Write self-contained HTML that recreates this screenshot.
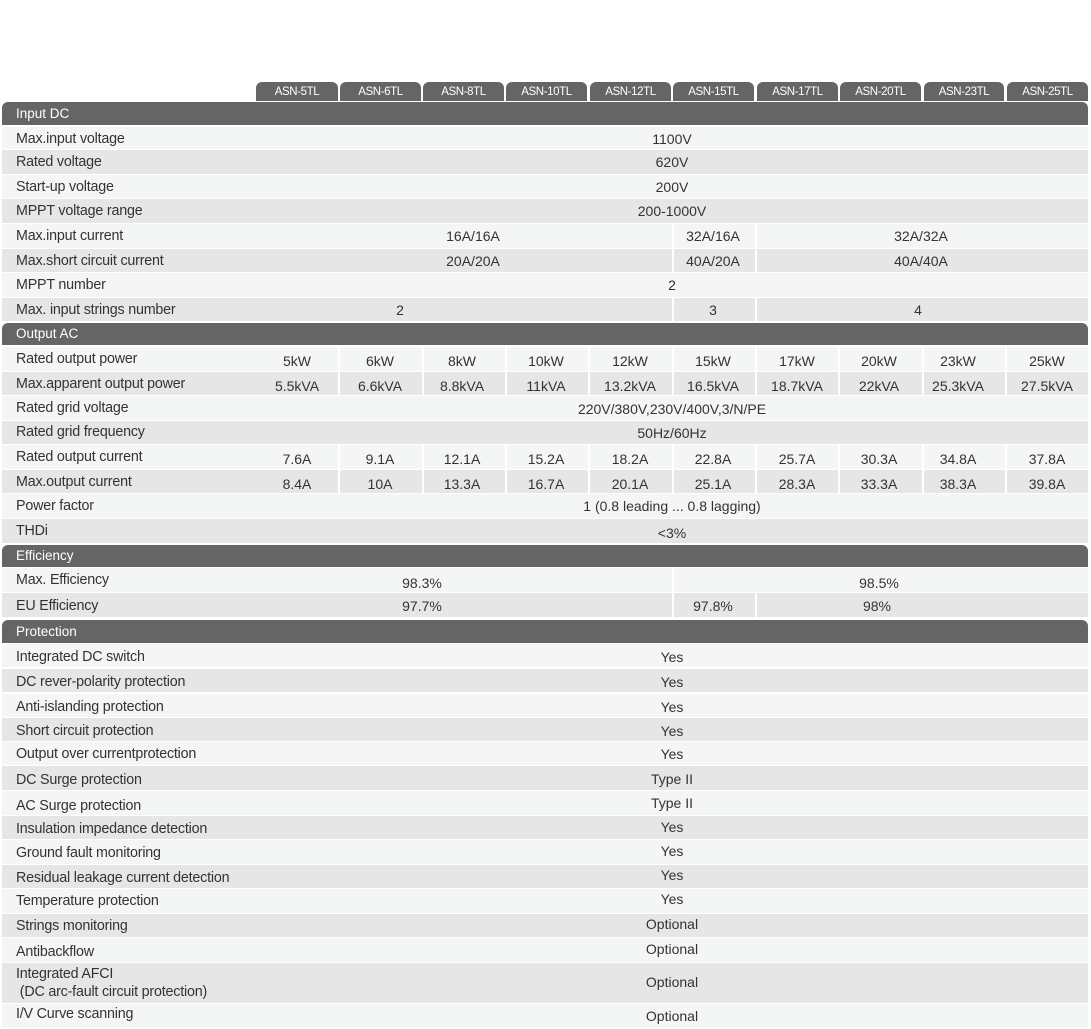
<!DOCTYPE html>
<html><head><meta charset="utf-8"><style>
body{margin:0;width:1091px;height:1029px;background:#fff;position:relative;overflow:hidden;font-family:"Liberation Sans",sans-serif;color:#333;font-size:14px}
.tab{position:absolute;top:82px;height:19px;background:#656565;color:#fff;font-size:11.5px;letter-spacing:-0.4px;line-height:20px;text-align:center;border-radius:6px 6px 0 0}
.h{position:absolute;left:2px;width:1086px;background:#656565;color:#fff;font-size:13.5px;border-radius:6px 6px 0 0}
.h span{position:absolute;left:14px}
.r{position:absolute;left:2px;width:1086px}
.L{background:#f4f5f5}.G{background:#e6e6e6}
.t{position:absolute;left:14px;white-space:nowrap;font-size:14.3px;letter-spacing:-0.2px}
.v{position:absolute;transform:translateX(-50%);white-space:nowrap}
.s{position:absolute;top:0;bottom:0;width:2px;background:#fff}
</style></head><body>
<div class="tab" style="left:256px;width:82px">ASN-5TL</div>
<div class="tab" style="left:340px;width:81px">ASN-6TL</div>
<div class="tab" style="left:423px;width:81px">ASN-8TL</div>
<div class="tab" style="left:506px;width:81px">ASN-10TL</div>
<div class="tab" style="left:590px;width:81px">ASN-12TL</div>
<div class="tab" style="left:673px;width:81px">ASN-15TL</div>
<div class="tab" style="left:757px;width:81px">ASN-17TL</div>
<div class="tab" style="left:840px;width:81px">ASN-20TL</div>
<div class="tab" style="left:924px;width:80px">ASN-23TL</div>
<div class="tab" style="left:1007px;width:81px">ASN-25TL</div>

<div class="h" style="top:102px;height:23px;line-height:23px"><span>Input DC</span></div>
<div class="r L" style="top:127px;height:22px;line-height:24px"><span class="t">Max.input voltage</span><span class="v" style="left:670px">1100V</span></div>
<div class="r G" style="top:150px;height:24px;line-height:25px"><span class="t">Rated voltage</span><span class="v" style="left:670px">620V</span></div>
<div class="r L" style="top:175px;height:23px;line-height:25px"><span class="t">Start-up voltage</span><span class="v" style="left:670px">200V</span></div>
<div class="r G" style="top:199px;height:24px;line-height:25px"><span class="t">MPPT voltage range</span><span class="v" style="left:670px">200-1000V</span></div>
<div class="r L" style="top:224px;height:24px;line-height:24px"><span class="t">Max.input current</span><span class="v" style="left:471px">16A/16A</span><span class="s" style="left:670px"></span><span class="v" style="left:711px">32A/16A</span><span class="s" style="left:753px"></span><span class="v" style="left:919px">32A/32A</span></div>
<div class="r G" style="top:249px;height:23px;line-height:24px"><span class="t">Max.short circuit current</span><span class="v" style="left:471px">20A/20A</span><span class="s" style="left:670px"></span><span class="v" style="left:711px">40A/20A</span><span class="s" style="left:753px"></span><span class="v" style="left:919px">40A/40A</span></div>
<div class="r L" style="top:273px;height:24px;line-height:24px"><span class="t">MPPT number</span><span class="v" style="left:670px">2</span></div>
<div class="r G" style="top:298px;height:23px;line-height:25px"><span class="t">Max. input strings number</span><span class="v" style="left:398px">2</span><span class="s" style="left:670px"></span><span class="v" style="left:711px">3</span><span class="s" style="left:753px"></span><span class="v" style="left:916px">4</span></div>

<div class="h" style="top:323px;height:22px;line-height:22px"><span>Output AC</span></div>
<div class="r L" style="top:347px;height:24px;line-height:28px"><span class="t" style="line-height:24px">Rated output power</span><span class="v" style="left:295px">5kW</span><span class="s" style="left:336px"></span><span class="v" style="left:378px">6kW</span><span class="s" style="left:420px"></span><span class="v" style="left:460px">8kW</span><span class="s" style="left:503px"></span><span class="v" style="left:544px">10kW</span><span class="s" style="left:586px"></span><span class="v" style="left:628px">12kW</span><span class="s" style="left:670px"></span><span class="v" style="left:711px">15kW</span><span class="s" style="left:753px"></span><span class="v" style="left:795px">17kW</span><span class="s" style="left:836px"></span><span class="v" style="left:877px">20kW</span><span class="s" style="left:920px"></span><span class="v" style="left:956px">23kW</span><span class="s" style="left:1003px"></span><span class="v" style="left:1045px">25kW</span></div>
<div class="r G" style="top:372px;height:23px;line-height:28px"><span class="t" style="line-height:24px">Max.apparent output power</span><span class="v" style="left:295px">5.5kVA</span><span class="s" style="left:336px"></span><span class="v" style="left:378px">6.6kVA</span><span class="s" style="left:420px"></span><span class="v" style="left:460px">8.8kVA</span><span class="s" style="left:503px"></span><span class="v" style="left:544px">11kVA</span><span class="s" style="left:586px"></span><span class="v" style="left:628px">13.2kVA</span><span class="s" style="left:670px"></span><span class="v" style="left:711px">16.5kVA</span><span class="s" style="left:753px"></span><span class="v" style="left:795px">18.7kVA</span><span class="s" style="left:836px"></span><span class="v" style="left:877px">22kVA</span><span class="s" style="left:920px"></span><span class="v" style="left:956px">25.3kVA</span><span class="s" style="left:1003px"></span><span class="v" style="left:1045px">27.5kVA</span></div>
<div class="r L" style="top:396px;height:24px;line-height:27px"><span class="t" style="line-height:24px">Rated grid voltage</span><span class="v" style="left:670px">220V/380V,230V/400V,3/N/PE</span></div>
<div class="r G" style="top:421px;height:23px;line-height:25px"><span class="t" style="line-height:23px">Rated grid frequency</span><span class="v" style="left:670px">50Hz/60Hz</span></div>
<div class="r L" style="top:445px;height:24px;line-height:29px"><span class="t" style="line-height:24px">Rated output current</span><span class="v" style="left:295px">7.6A</span><span class="s" style="left:336px"></span><span class="v" style="left:378px">9.1A</span><span class="s" style="left:420px"></span><span class="v" style="left:460px">12.1A</span><span class="s" style="left:503px"></span><span class="v" style="left:544px">15.2A</span><span class="s" style="left:586px"></span><span class="v" style="left:628px">18.2A</span><span class="s" style="left:670px"></span><span class="v" style="left:711px">22.8A</span><span class="s" style="left:753px"></span><span class="v" style="left:795px">25.7A</span><span class="s" style="left:836px"></span><span class="v" style="left:877px">30.3A</span><span class="s" style="left:920px"></span><span class="v" style="left:956px">34.8A</span><span class="s" style="left:1003px"></span><span class="v" style="left:1045px">37.8A</span></div>
<div class="r G" style="top:470px;height:23px;line-height:28px"><span class="t" style="line-height:24px">Max.output current</span><span class="v" style="left:295px">8.4A</span><span class="s" style="left:336px"></span><span class="v" style="left:378px">10A</span><span class="s" style="left:420px"></span><span class="v" style="left:460px">13.3A</span><span class="s" style="left:503px"></span><span class="v" style="left:544px">16.7A</span><span class="s" style="left:586px"></span><span class="v" style="left:628px">20.1A</span><span class="s" style="left:670px"></span><span class="v" style="left:711px">25.1A</span><span class="s" style="left:753px"></span><span class="v" style="left:795px">28.3A</span><span class="s" style="left:836px"></span><span class="v" style="left:877px">33.3A</span><span class="s" style="left:920px"></span><span class="v" style="left:956px">38.3A</span><span class="s" style="left:1003px"></span><span class="v" style="left:1045px">39.8A</span></div>
<div class="r L" style="top:494px;height:24px;line-height:25px"><span class="t">Power factor</span><span class="v" style="left:670px">1 (0.8 leading ... 0.8 lagging)</span></div>
<div class="r G" style="top:519px;height:24px;line-height:28px"><span class="t" style="line-height:24px">THDi</span><span class="v" style="left:670px">&lt;3%</span></div>

<div class="h" style="top:545px;height:22px;line-height:22px"><span>Efficiency</span></div>
<div class="r L" style="top:568px;height:24px;line-height:30px"><span class="t" style="line-height:24px">Max. Efficiency</span><span class="v" style="left:420px">98.3%</span><span class="s" style="left:670px"></span><span class="v" style="left:877px">98.5%</span></div>
<div class="r G" style="top:593px;height:24px;line-height:26px"><span class="t">EU Efficiency</span><span class="v" style="left:420px">97.7%</span><span class="s" style="left:670px"></span><span class="v" style="left:711px">97.8%</span><span class="s" style="left:753px"></span><span class="v" style="left:875px">98%</span></div>

<div class="h" style="top:620px;height:23px;line-height:23px"><span>Protection</span></div>
<div class="r L" style="top:644px;height:23px;line-height:26px"><span class="t">Integrated DC switch</span><span class="v" style="left:670px">Yes</span></div>
<div class="r G" style="top:669px;height:23px;line-height:26px"><span class="t">DC rever-polarity protection</span><span class="v" style="left:670px">Yes</span></div>
<div class="r L" style="top:694px;height:23px;line-height:27px"><span class="t">Anti-islanding protection</span><span class="v" style="left:670px">Yes</span></div>
<div class="r G" style="top:718px;height:23px;line-height:27px"><span class="t">Short circuit protection</span><span class="v" style="left:670px">Yes</span></div>
<div class="r L" style="top:742px;height:23px;line-height:25px"><span class="t">Output over currentprotection</span><span class="v" style="left:670px">Yes</span></div>
<div class="r G" style="top:766px;height:24px;line-height:27px"><span class="t" style="line-height:29px">DC Surge protection</span><span class="v" style="left:670px">Type II</span></div>
<div class="r L" style="top:791px;height:24px;line-height:25px"><span class="t" style="line-height:31px">AC Surge protection</span><span class="v" style="left:670px">Type II</span></div>
<div class="r G" style="top:816px;height:23px;line-height:22px"><span class="t" style="line-height:27px">Insulation impedance detection</span><span class="v" style="left:670px">Yes</span></div>
<div class="r L" style="top:840px;height:24px;line-height:22px"><span class="t" style="line-height:27px">Ground fault monitoring</span><span class="v" style="left:670px">Yes</span></div>
<div class="r G" style="top:865px;height:23px;line-height:20px"><span class="t" style="line-height:26px">Residual leakage current detection</span><span class="v" style="left:670px">Yes</span></div>
<div class="r L" style="top:889px;height:24px;line-height:21px"><span class="t" style="line-height:25px">Temperature protection</span><span class="v" style="left:670px">Yes</span></div>
<div class="r G" style="top:914px;height:23px;line-height:21px"><span class="t" style="line-height:24px">Strings monitoring</span><span class="v" style="left:670px">Optional</span></div>
<div class="r L" style="top:938px;height:24px;line-height:22px"><span class="t" style="line-height:28px">Antibackflow</span><span class="v" style="left:670px">Optional</span></div>
<div class="r G" style="top:963px;height:40px;line-height:38px"><span class="t" style="top:2px;line-height:18px">Integrated AFCI<br>&nbsp;(DC arc-fault circuit protection)</span><span class="v" style="left:670px">Optional</span></div>
<div class="r L" style="top:1004px;height:23px;line-height:25px"><span class="t" style="line-height:21px">I/V Curve scanning</span><span class="v" style="left:670px">Optional</span></div>
</body></html>
